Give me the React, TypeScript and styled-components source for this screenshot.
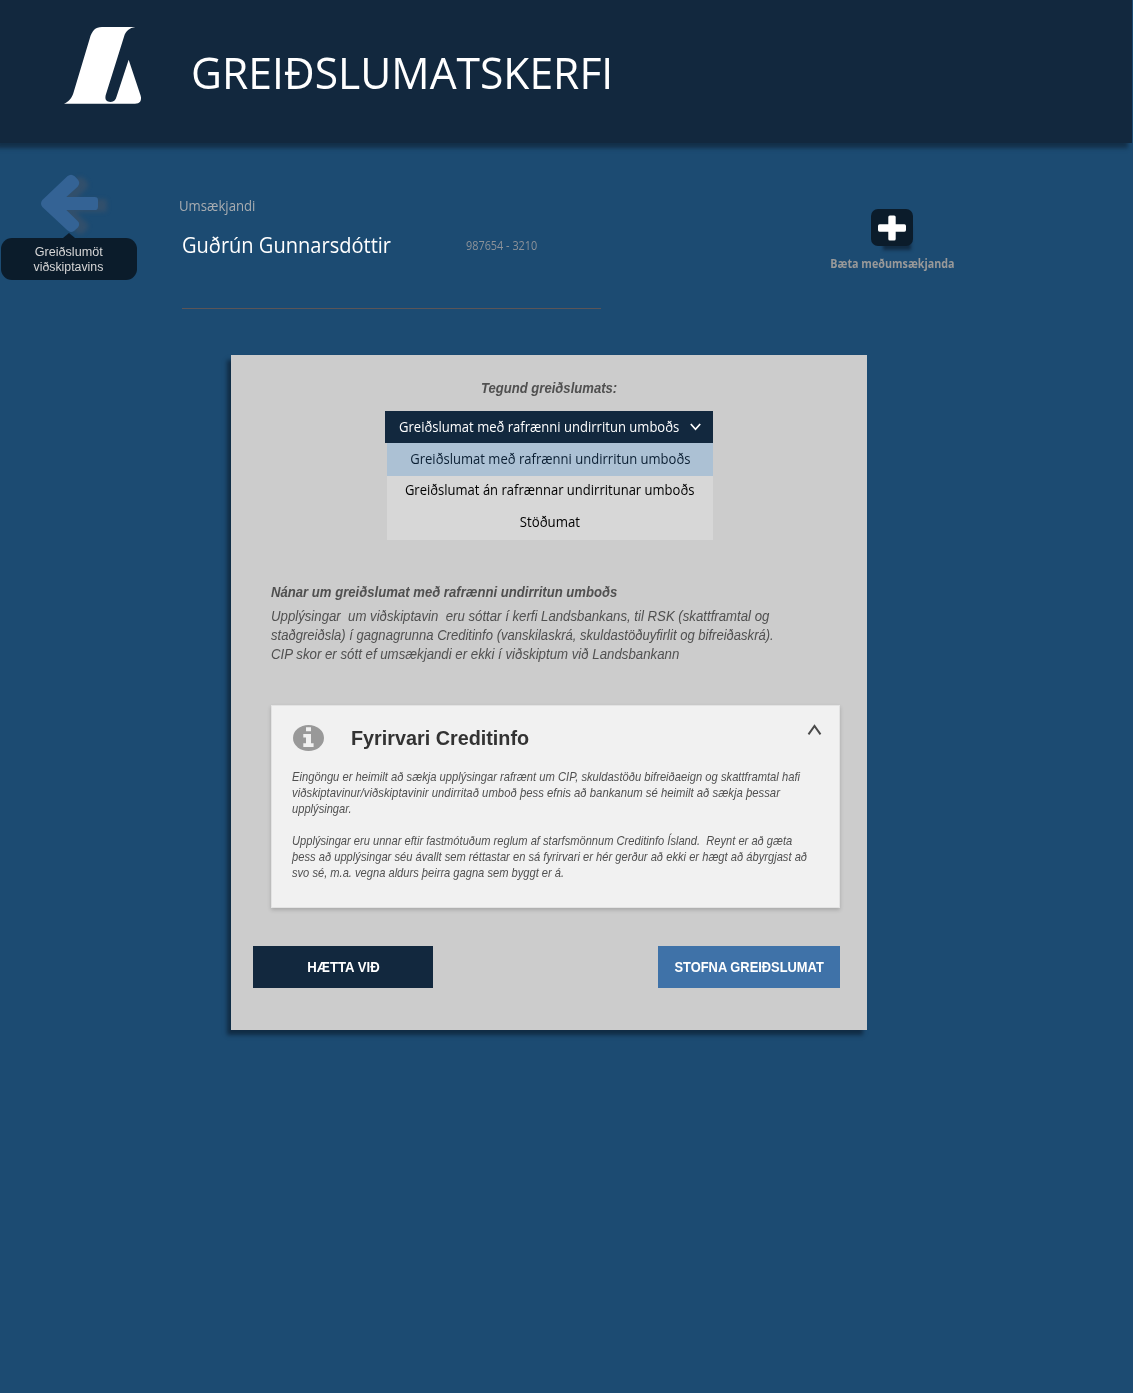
import React from "react";
import styled, { createGlobalStyle } from "styled-components";

const humanist = `"Open Sans", "Noto Sans", sans-serif`;
const grotesque = `"Liberation Sans", Arial, sans-serif`;

const GlobalStyle = createGlobalStyle`
  *, *::before, *::after { box-sizing: border-box; }
  body { margin: 0; background: #1c4b72; }
`;

const Page = styled.div`
  display: flex;
  flex-direction: column;
  width: 1133px;
  min-height: 1393px;
  background: #1c4b72;
  font-family: ${grotesque};
`;

/* A single line of copy. $squeeze narrows or widens the letterforms. */
const Line = styled.span<{ $squeeze?: number; $origin?: string }>`
  display: block;
  width: max-content;
  white-space: pre;
  transform: scaleX(${(p) => p.$squeeze ?? 1});
  transform-origin: ${(p) => p.$origin ?? "left"} center;
`;

const Header = styled.header`
  display: flex;
  align-items: flex-start;
  width: 1132px;
  height: 143px;
  padding: 26px 0 0 64px;
  background: #12283e;
  box-shadow: -4px 5px 4px rgba(14, 30, 46, 0.6);
`;

const Logo = styled.svg`
  width: 78px;
  height: 78px;
  margin-right: 49px;
`;

const Title = styled.h1`
  margin: 15px 0 0;
  font: 400 44.5px/61px ${humanist};
  color: #fff;
`;

const Applicant = styled.section`
  display: flex;
  height: 212px;
`;

const BackLink = styled.nav`
  display: flex;
  flex-direction: column;
  width: 137px;
  padding: 31px 0 0 1px;
`;

const ArrowIcon = styled.svg`
  width: 60px;
  height: 60px;
  margin-left: 39px;
  overflow: visible;
  filter: drop-shadow(9px 2px 2px rgba(75, 85, 100, 0.45));
`;

const Tooltip = styled.div`
  position: relative;
  display: flex;
  flex-direction: column;
  align-items: center;
  height: 42px;
  margin-top: 4px;
  padding: 7px 1px 0 0;
  border-radius: 11px;
  background: #0b1c2b;
  color: #d6d6d6;
  font: 400 12.5px/15px ${grotesque};

  &::before {
    content: "";
    position: absolute;
    top: -5px;
    left: 62px;
    border: 6px solid transparent;
    border-top: 0;
    border-bottom: 5px solid #0b1c2b;
  }
`;

const Person = styled.div`
  width: 419px;
  margin-left: 45px;
  padding-top: 53px;
`;

const Role = styled.div`
  margin-left: -3px;
  font: 400 14px/20px ${humanist};
  color: #a9adb1;
`;

const NameRow = styled.div`
  display: flex;
  align-items: flex-start;
  height: 93px;
  padding-top: 13px;
  border-bottom: 1px solid #5b5557;
`;

const Name = styled.div`
  width: 284px;
  font: 400 22px/30px ${humanist};
  color: #fff;
`;

const IdNumber = styled.div`
  padding-top: 9px;
  font: 400 12px/16px ${humanist};
  color: #8c9299;
`;

const AddColumn = styled.div`
  display: flex;
  flex-direction: column;
  align-items: center;
  width: 180px;
  margin-left: 201px;
  padding-top: 66px;
`;

const AddButton = styled.button`
  display: flex;
  align-items: center;
  justify-content: center;
  width: 42px;
  height: 37px;
  padding: 0;
  border: 0;
  border-radius: 7px;
  background: #0b1c2b;
  box-shadow: 5px 11px 3px -7px rgba(12, 28, 44, 0.65);
`;

const AddLabel = styled.div`
  margin-top: 10px;
  font: 700 11.5px/16px ${humanist};
  color: #999;
`;

const Panel = styled.main`
  display: flex;
  flex-direction: column;
  width: 636px;
  height: 675px;
  margin-left: 231px;
  padding: 24px 27px 42px 22px;
  background: #ccc;
  box-shadow: -4px 5px 4px rgba(14, 34, 54, 0.75);
`;

const PanelHeading = styled.h2`
  margin: 0 0 14px 5px;
  align-self: center;
  font: italic 700 15px/18px ${grotesque};
  color: #505050;
`;

const Select = styled.div`
  display: flex;
  flex-direction: column;
  align-items: flex-end;
  width: 328px;
  margin-left: 132px;
  font: 400 14px/20px ${humanist};
`;

const SelectHead = styled.div`
  display: flex;
  align-items: center;
  justify-content: space-between;
  width: 328px;
  height: 32px;
  padding: 0 12px 0 14px;
  background: #12283e;
  color: #fff;
`;

const SelectLabel = styled.div`
  width: 280px;
`;

const Option = styled.div<{ $active?: boolean }>`
  display: flex;
  justify-content: center;
  width: 326px;
  height: ${(p) => (p.$active ? 33 : 32)}px;
  padding-top: ${(p) => (p.$active ? 6 : 4)}px;
  background: ${(p) => (p.$active ? "#acc1d4" : "#d7d7d7")};
  color: ${(p) => (p.$active ? "#0b1f33" : "#000")};
`;

const Details = styled.section`
  margin: 42px 0 0 18px;
  color: #505050;
  font: italic 400 15.5px/19px ${grotesque};
`;

const DetailsHeading = styled.h3`
  margin: 0 0 4px;
  font: italic 700 15px/20px ${grotesque};
`;

const Card = styled.section`
  flex: none;
  width: 569px;
  height: 203px;
  margin: 42px 0 38px 18px;
  padding: 18px 17px 0 20px;
  border: 1px solid #e3e3e3;
  background: #f1f1f1;
  box-shadow: 0 2px 4px rgba(0, 0, 0, 0.18);
`;

const CardHead = styled.header`
  display: flex;
  align-items: flex-start;
`;

const InfoIcon = styled.svg`
  width: 33px;
  height: 28px;
`;

const CardTitle = styled.h3`
  flex: 1;
  margin: 2px 0 0 26px;
  font: 700 20px/24px ${grotesque};
  color: #333;
`;

const Collapse = styled.svg`
  width: 15px;
  height: 13px;
  margin-top: -1px;
`;

const CardCopy = styled.div`
  margin-top: 17px;
  font: italic 400 13.5px/16px ${grotesque};
  color: #505050;
`;

const Paragraph = styled.p`
  margin: 0 0 16px;
`;

const Actions = styled.footer`
  display: flex;
  justify-content: space-between;
`;

const Action = styled.button<{ $primary?: boolean }>`
  display: flex;
  align-items: center;
  justify-content: center;
  width: ${(p) => (p.$primary ? 182 : 180)}px;
  height: 42px;
  padding: 0;
  border: 0;
  background: ${(p) => (p.$primary ? "#3f72a8" : "#12283e")};
  color: #fff;
  font: 700 14px/16px ${grotesque};
`;

export default function App() {
  return (
    <>
      <GlobalStyle />
      <Page>
        <Header>
          <Logo viewBox="42 48 234 234" fill="#fff">
            <path d="M42 281C56 276 64 266 70 250L119 86C126 62 136 51 156 51H256C238 54 228 62 222 80L167 256C164 270 170 276 182 276C192 276 197 270 200 259L236 149L272 257C276 272 269 281 255 281Z" />
          </Logo>
          <Title><Line $squeeze={0.957}>GREIÐSLUMATSKERFI</Line></Title>
        </Header>

        <Applicant>
          <BackLink>
            <ArrowIcon viewBox="120 42 180 180" fill="#346395">
              <path d="M127 120L202 49Q213 40 224 49L234 59Q242 70 233 80L199 111H284Q294 111 294 121V140Q294 150 284 150H199L233 183Q242 192 233 203L223 212Q212 220 202 211L127 141Q119 130 127 120Z" />
            </ArrowIcon>
            <Tooltip>
              <Line $origin="center" $squeeze={1.01}>Greiðslumöt</Line>
              <Line $origin="center" $squeeze={0.985}>viðskiptavins</Line>
            </Tooltip>
          </BackLink>
          <Person>
            <Role><Line $squeeze={0.94}>Umsækjandi</Line></Role>
            <NameRow>
              <Name><Line $squeeze={0.911}>Guðrún Gunnarsdóttir</Line></Name>
              <IdNumber><Line $squeeze={0.905}>987654 - 3210</Line></IdNumber>
            </NameRow>
          </Person>
          <AddColumn>
            <AddButton aria-label="Bæta meðumsækjanda">
              <svg width="28" height="26" viewBox="0 0 28 26" fill="#fff">
                <rect x="0" y="9.3" width="28" height="7.4" rx="1.6" />
                <rect x="10.3" y="0.5" width="7.4" height="25" rx="1.6" />
              </svg>
            </AddButton>
            <AddLabel><Line $origin="center" $squeeze={0.935}>Bæta meðumsækjanda</Line></AddLabel>
          </AddColumn>
        </Applicant>

        <Panel>
          <PanelHeading><Line $origin="center" $squeeze={0.873}>Tegund greiðslumats:</Line></PanelHeading>
          <Select>
            <SelectHead>
              <SelectLabel><Line $squeeze={0.932}>Greiðslumat með rafrænni undirritun umboðs</Line></SelectLabel>
              <svg width="11" height="8" viewBox="0 0 11 8" fill="none" stroke="#fff" strokeWidth="1.7">
                <path d="M0.8 1L5.5 6.2L10.2 1" />
              </svg>
            </SelectHead>
            <Option $active><Line $origin="center" $squeeze={0.932}>Greiðslumat með rafrænni undirritun umboðs</Line></Option>
            <Option><Line $origin="center" $squeeze={0.93}>Greiðslumat án rafrænnar undirritunar umboðs</Line></Option>
            <Option><Line $origin="center" $squeeze={0.945}>Stöðumat</Line></Option>
          </Select>

          <Details>
            <DetailsHeading><Line $squeeze={0.875}>Nánar um greiðslumat með rafrænni undirritun umboðs</Line></DetailsHeading>
            <Line $squeeze={0.852}>{"Upplýsingar  um viðskiptavin  eru sóttar í kerfi Landsbankans, til RSK (skattframtal og"}</Line>
            <Line $squeeze={0.842}>staðgreiðsla) í gagnagrunna Creditinfo (vanskilaskrá, skuldastöðuyfirlit og bifreiðaskrá).</Line>
            <Line $squeeze={0.855}>CIP skor er sótt ef umsækjandi er ekki í viðskiptum við Landsbankann</Line>
          </Details>

          <Card>
            <CardHead>
              <InfoIcon viewBox="0 0 33 28">
                <ellipse cx="16.5" cy="14" rx="15.5" ry="13" fill="#999" />
                <path d="M14 3.3H19V7.2H14ZM11.3 10H19V19.3H21.6V23H11.3V19.3H14V13.6H11.3Z" fill="#f1f1f1" />
              </InfoIcon>
              <CardTitle><Line $squeeze={0.989}>Fyrirvari Creditinfo</Line></CardTitle>
              <Collapse viewBox="0 0 15 13" fill="none" stroke="#4a4a4a" strokeWidth="2">
                <path d="M1.5 11.3L7.5 3L13.5 11.3" />
              </Collapse>
            </CardHead>
            <CardCopy>
              <Paragraph>
                <Line $squeeze={0.83}>Eingöngu er heimilt að sækja upplýsingar rafrænt um CIP, skuldastöðu bifreiðaeign og skattframtal hafi</Line>
                <Line $squeeze={0.839}>viðskiptavinur/viðskiptavinir undirritað umboð þess efnis að bankanum sé heimilt að sækja þessar</Line>
                <Line $squeeze={0.825}>upplýsingar.</Line>
              </Paragraph>
              <Paragraph>
                <Line $squeeze={0.824}>{"Upplýsingar eru unnar eftir fastmótuðum reglum af starfsmönnum Creditinfo Ísland.  Reynt er að gæta"}</Line>
                <Line $squeeze={0.827}>þess að upplýsingar séu ávallt sem réttastar en sá fyrirvari er hér gerður að ekki er hægt að ábyrgjast að</Line>
                <Line $squeeze={0.824}>svo sé, m.a. vegna aldurs þeirra gagna sem byggt er á.</Line>
              </Paragraph>
            </CardCopy>
          </Card>

          <Actions>
            <Action><Line $origin="center" $squeeze={0.94}>HÆTTA VIÐ</Line></Action>
            <Action $primary><Line $origin="center" $squeeze={0.92}>STOFNA GREIÐSLUMAT</Line></Action>
          </Actions>
        </Panel>
      </Page>
    </>
  );
}
